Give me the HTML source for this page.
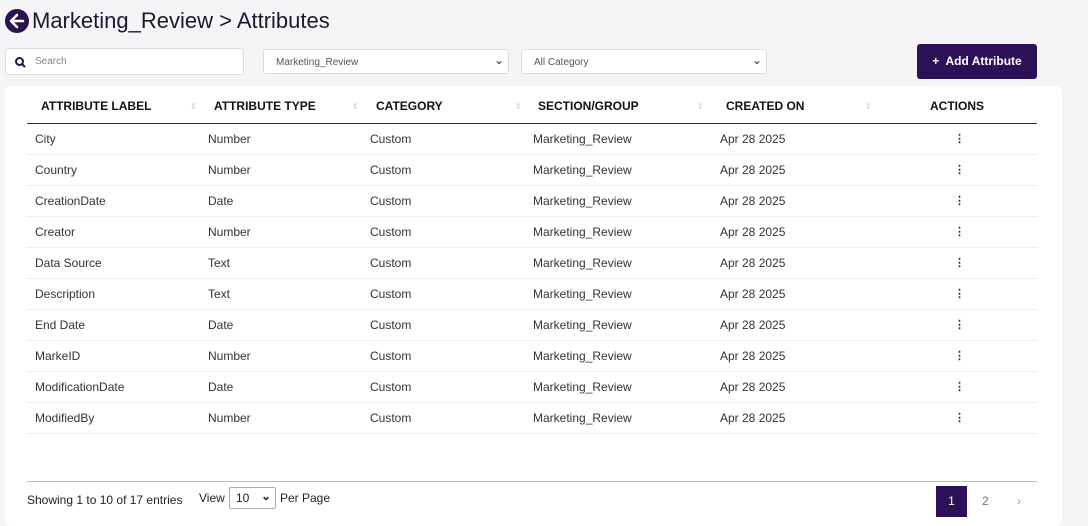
<!DOCTYPE html>
<html><head><meta charset="utf-8"><style>
*{box-sizing:border-box;margin:0;padding:0}
body{width:1088px;height:524px;background:#f5f5f8;font-family:"Liberation Sans",sans-serif;position:relative;overflow:hidden;color:#222}
.abs{position:absolute}
.title{left:32px;top:8px;font-size:22px;color:#1a1a2e}
.back{left:5px;top:9px;width:24px;height:24px;border-radius:50%;background:#2a1250}
.inp{background:#fff;border:1px solid #dcdce4;border-radius:3px;font-size:10px;color:#555}
.card{left:5px;top:86px;width:1057px;height:440px;background:#fff;border-radius:6px}
.th{top:99px;font-size:12px;font-weight:bold;color:#111}
.sort{font-size:8px;color:#ccc;top:102px}
.row{position:absolute;left:27px;width:1010px;height:31px;border-bottom:1px solid #eee;font-size:12px;color:#333}
.row span{position:absolute;top:8px}
.dots{font-weight:bold;font-size:11px}
</style></head><body>
<div class="abs back"><svg width="24" height="24" viewBox="0 0 24 24"><path d="M18 12H7M12 6l-6 6 6 6" stroke="#fff" stroke-width="2.6" fill="none" stroke-linecap="round" stroke-linejoin="round"/></svg></div>
<div class="abs title">Marketing_Review &gt; Attributes</div>
<div class="abs inp" style="left:5px;top:48px;width:239px;height:27px"><svg class="abs" style="left:9px;top:8px" width="11" height="11" viewBox="0 0 11 11"><circle cx="4.5" cy="4.5" r="3.5" stroke="#2a1250" stroke-width="2" fill="none"/><path d="M7 7l3 3" stroke="#2a1250" stroke-width="2"/></svg><span class="abs" style="left:29px;top:7px;color:#888">Search</span></div>
<div class="abs inp" style="left:263px;top:49px;width:246px;height:25px"><span class="abs" style="left:12px;top:7px">Marketing_Review</span><span class="abs" style="right:4px;top:3px;font-size:12px;color:#333">&#8964;</span></div>
<div class="abs inp" style="left:521px;top:49px;width:246px;height:25px"><span class="abs" style="left:12px;top:7px">All Category</span><span class="abs" style="right:4px;top:3px;font-size:12px;color:#333">&#8964;</span></div>
<div class="abs" style="left:917px;top:44px;width:120px;height:35px;background:#2c1158;border-radius:3px;color:#fff;font-weight:bold;font-size:12px;line-height:35px;text-align:center">+&nbsp; Add Attribute</div>
<div class="abs card"></div>
<div class="abs th" style="left:41px">ATTRIBUTE LABEL</div><div class="abs sort" style="left:190px">&#8661;</div>
<div class="abs th" style="left:214px">ATTRIBUTE TYPE</div><div class="abs sort" style="left:352px">&#8661;</div>
<div class="abs th" style="left:376px">CATEGORY</div><div class="abs sort" style="left:515px">&#8661;</div>
<div class="abs th" style="left:538px">SECTION/GROUP</div><div class="abs sort" style="left:697px">&#8661;</div>
<div class="abs th" style="left:726px">CREATED ON</div><div class="abs sort" style="left:865px">&#8661;</div>
<div class="abs th" style="left:930px">ACTIONS</div>
<div class="abs" style="left:27px;top:123px;width:1010px;height:1px;background:#333"></div>
<div class="row" style="top:124px"><span style="left:8px">City</span><span style="left:181px">Number</span><span style="left:343px">Custom</span><span style="left:506px">Marketing_Review</span><span style="left:693px">Apr 28 2025</span><span class="dots" style="left:927px">&#8942;</span></div>
<div class="row" style="top:155px"><span style="left:8px">Country</span><span style="left:181px">Number</span><span style="left:343px">Custom</span><span style="left:506px">Marketing_Review</span><span style="left:693px">Apr 28 2025</span><span class="dots" style="left:927px">&#8942;</span></div>
<div class="row" style="top:186px"><span style="left:8px">CreationDate</span><span style="left:181px">Date</span><span style="left:343px">Custom</span><span style="left:506px">Marketing_Review</span><span style="left:693px">Apr 28 2025</span><span class="dots" style="left:927px">&#8942;</span></div>
<div class="row" style="top:217px"><span style="left:8px">Creator</span><span style="left:181px">Number</span><span style="left:343px">Custom</span><span style="left:506px">Marketing_Review</span><span style="left:693px">Apr 28 2025</span><span class="dots" style="left:927px">&#8942;</span></div>
<div class="row" style="top:248px"><span style="left:8px">Data Source</span><span style="left:181px">Text</span><span style="left:343px">Custom</span><span style="left:506px">Marketing_Review</span><span style="left:693px">Apr 28 2025</span><span class="dots" style="left:927px">&#8942;</span></div>
<div class="row" style="top:279px"><span style="left:8px">Description</span><span style="left:181px">Text</span><span style="left:343px">Custom</span><span style="left:506px">Marketing_Review</span><span style="left:693px">Apr 28 2025</span><span class="dots" style="left:927px">&#8942;</span></div>
<div class="row" style="top:310px"><span style="left:8px">End Date</span><span style="left:181px">Date</span><span style="left:343px">Custom</span><span style="left:506px">Marketing_Review</span><span style="left:693px">Apr 28 2025</span><span class="dots" style="left:927px">&#8942;</span></div>
<div class="row" style="top:341px"><span style="left:8px">MarkeID</span><span style="left:181px">Number</span><span style="left:343px">Custom</span><span style="left:506px">Marketing_Review</span><span style="left:693px">Apr 28 2025</span><span class="dots" style="left:927px">&#8942;</span></div>
<div class="row" style="top:372px"><span style="left:8px">ModificationDate</span><span style="left:181px">Date</span><span style="left:343px">Custom</span><span style="left:506px">Marketing_Review</span><span style="left:693px">Apr 28 2025</span><span class="dots" style="left:927px">&#8942;</span></div>
<div class="row" style="top:403px"><span style="left:8px">ModifiedBy</span><span style="left:181px">Number</span><span style="left:343px">Custom</span><span style="left:506px">Marketing_Review</span><span style="left:693px">Apr 28 2025</span><span class="dots" style="left:927px">&#8942;</span></div>
<div class="abs" style="left:27px;top:481px;width:1010px;height:1px;background:#bbb"></div>
<div class="abs" style="left:27px;top:493px;font-size:12px">Showing 1 to 10 of 17 entries</div>
<div class="abs" style="left:199px;top:491px;font-size:12px">View</div>
<div class="abs" style="left:229px;top:487px;width:47px;height:22px;border:1px solid #aaa;border-radius:2px;font-size:12px;padding:3px 0 0 6px">10<span style="position:absolute;right:4px;top:1px;font-weight:bold">&#8964;</span></div>
<div class="abs" style="left:280px;top:491px;font-size:12px">Per Page</div>
<div class="abs" style="left:936px;top:486px;width:31px;height:31px;background:#2c1158;color:#fff;font-size:12px;text-align:center;line-height:31px">1</div>
<div class="abs" style="left:982px;top:494px;font-size:12px;color:#777">2</div>
<div class="abs" style="left:1017px;top:494px;font-size:12px;color:#999">&rsaquo;</div>
</body></html>
